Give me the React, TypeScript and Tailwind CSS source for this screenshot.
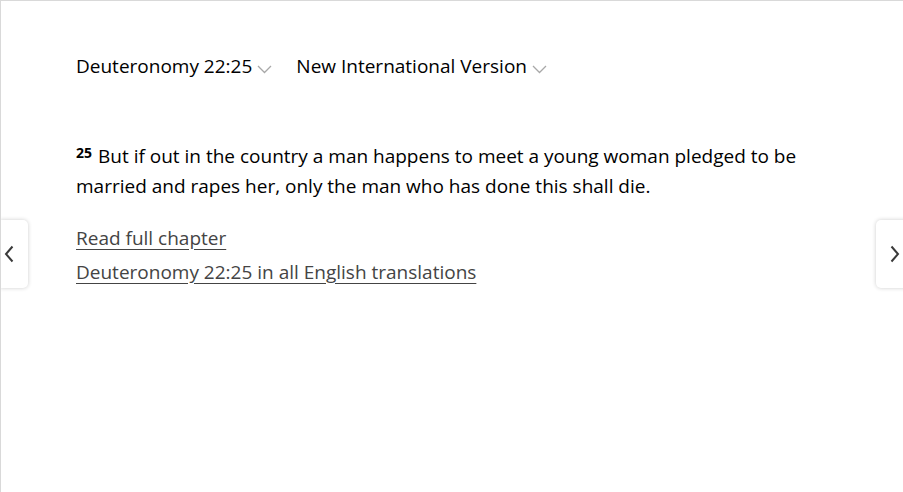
import React from "react";

const Chevron = () => (
  <svg width="15" height="9" viewBox="0 0 15 9" className="ml-[5px] mt-[7px]" fill="none">
    <path d="M1 1 L7.5 7.5 L14 1" stroke="#a8a8a8" strokeWidth="1.3" />
  </svg>
);

export default function App() {
  return (
    <div
      className="relative w-[903px] h-[492px] overflow-hidden bg-white border-t border-l border-[#d9d9d9] text-black"
      style={{ fontFamily: '"Open Sans", "Noto Sans", sans-serif' }}
    >
      <div className="pl-[75px] pr-[80px] pt-[50px]">
        <div className="flex items-center gap-[24px] text-[19px] leading-[30px]">
          <div className="flex items-center">
            <span>Deuteronomy 22:25</span>
            <Chevron />
          </div>
          <div className="flex items-center">
            <span>New International Version</span>
            <Chevron />
          </div>
        </div>
        <p className="mt-[60px] text-[19px] leading-[30px]">
          <span className="inline-block align-top mt-[3px] text-[14px] font-bold mr-[6px] leading-[18px]">25</span>
          But if out in the country a man happens to meet a young woman pledged to be married and rapes her, only the man who has done this shall die.
        </p>
        <div className="mt-[22px] flex flex-col items-start gap-[4px] text-[19px] leading-[30px] text-[#444]">
          <a className="underline underline-offset-[4px]">Read full chapter</a>
          <a className="underline underline-offset-[4px]">Deuteronomy 22:25 in all English translations</a>
        </div>
      </div>
      <button className="absolute left-[-1px] top-[219px] w-[28px] h-[68px] bg-white rounded-r-[5px] shadow-[0_0_4px_rgba(0,0,0,0.2)] flex items-center pl-[4px]">
        <svg width="10" height="18" viewBox="0 0 10 18" fill="none">
          <path d="M8.5 1.5 L2 9 L8.5 16.5" stroke="#3a3a3a" strokeWidth="2" />
        </svg>
      </button>
      <button className="absolute left-[875px] top-[219px] w-[40px] h-[68px] bg-white rounded-l-[5px] shadow-[0_0_4px_rgba(0,0,0,0.2)] flex items-center pl-[14px]">
        <svg width="10" height="18" viewBox="0 0 10 18" fill="none">
          <path d="M1.5 1.5 L8 9 L1.5 16.5" stroke="#3a3a3a" strokeWidth="2" />
        </svg>
      </button>
    </div>
  );
}
